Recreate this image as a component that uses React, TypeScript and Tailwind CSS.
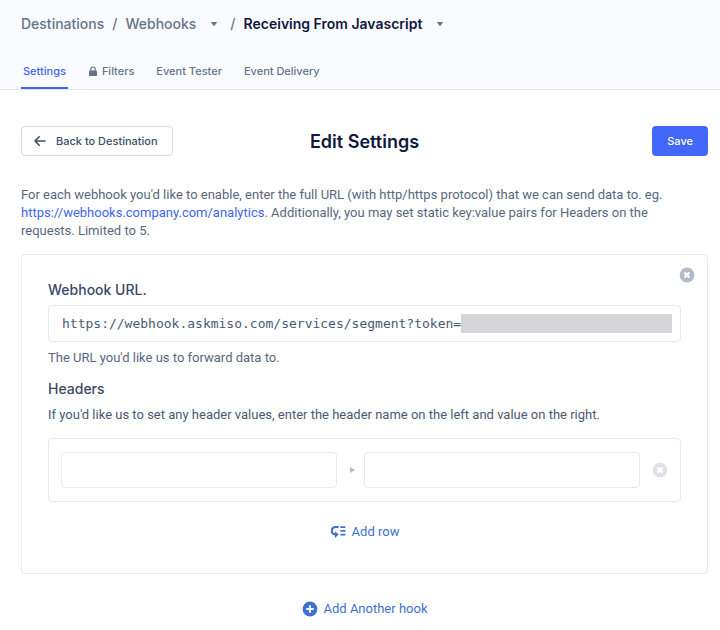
import { useState } from 'react'

const tabs = [
  { id: 'settings', label: 'Settings' },
  { id: 'filters', label: 'Filters', locked: true },
  { id: 'tester', label: 'Event Tester' },
  { id: 'delivery', label: 'Event Delivery' },
]

function Caret() {
  return (
    <svg viewBox="0 0 6 4" className="h-1 w-1.5" fill="currentColor" aria-hidden="true">
      <path d="M.5 0h5a.4.4 0 0 1 .3.7L3.4 3.7a.5.5 0 0 1-.8 0L.2.7A.4.4 0 0 1 .5 0Z" />
    </svg>
  )
}

function LockIcon() {
  return (
    <svg viewBox="0 0 10 11" className="h-[11px] w-2.5" aria-hidden="true">
      <path d="M2.8 5V3.2a2.2 2.2 0 0 1 4.4 0V5" fill="none" stroke="currentColor" strokeWidth="1.2" />
      <rect x="1" y="4.4" width="8" height="5.6" rx=".8" fill="currentColor" />
    </svg>
  )
}

function ArrowLeftIcon() {
  return (
    <svg
      viewBox="0 0 12 12"
      className="size-3"
      fill="none"
      stroke="currentColor"
      strokeWidth="1.6"
      strokeLinecap="round"
      strokeLinejoin="round"
      aria-hidden="true"
    >
      <path d="M11 6H1.2M5.2 1.8 1 6l4.2 4.2" />
    </svg>
  )
}

function CrossCircleIcon() {
  return (
    <svg viewBox="0 0 16 16" className="size-4" aria-hidden="true">
      <circle cx="8" cy="8" r="7.4" fill="currentColor" />
      <path d="m6.1 6.1 3.8 3.8m0-3.8-3.8 3.8" stroke="#fff" strokeWidth="2.2" strokeLinecap="round" />
    </svg>
  )
}

function PlusCircleIcon() {
  return (
    <svg viewBox="0 0 16 16" className="size-4" aria-hidden="true">
      <circle cx="8" cy="8" r="7.4" fill="currentColor" />
      <path d="M8 5v6M5 8h6" stroke="#fff" strokeWidth="1.8" strokeLinecap="round" />
    </svg>
  )
}

function AddRowIcon() {
  return (
    <svg viewBox="0 0 16 14" className="h-3.5 w-4" aria-hidden="true">
      <path d="M8.6 2.1H5A3.8 3.8 0 0 0 5 9.6h.8" fill="none" stroke="currentColor" strokeWidth="2" />
      <path d="M5 6.2 8.6 9.6 5 13Z" fill="currentColor" />
      <path d="M10.4 2.1h5M10.4 5.9h5M10.4 9.6h5" stroke="currentColor" strokeWidth="1.8" />
    </svg>
  )
}

export default function App() {
  const [active, setActive] = useState('settings')

  return (
    <div className="bg-white font-['Inter','Liberation_Sans',sans-serif] text-[#5a6680]">
      <header className="border-b border-[#e4e7ee] bg-[#fafbff] px-[21px]">
        <nav aria-label="Breadcrumb" className="flex h-[47px] items-center text-sm font-medium text-[#66738a]">
          <a href="#destinations">Destinations</a>
          <span className="mx-2">/</span>
          <a href="#webhooks">Webhooks</a>
          <button type="button" aria-label="Switch destination" className="ml-3.5 p-px">
            <Caret />
          </button>
          <span className="mr-2 ml-3">/</span>
          <a href="#javascript" aria-current="page" className="font-semibold text-[#101840]">
            Receiving From Javascript
          </a>
          <button type="button" aria-label="Switch source" className="ml-3.5 p-px">
            <Caret />
          </button>
        </nav>

        <div role="tablist" className="mt-1 flex gap-[18px] text-[11px] font-medium">
          {tabs.map((tab) => (
            <button
              key={tab.id}
              type="button"
              role="tab"
              aria-selected={active === tab.id}
              onClick={() => setActive(tab.id)}
              className={
                active === tab.id
                  ? 'flex h-[38px] items-center gap-1 border-b-2 border-[#4164f5] px-0.5 pt-1 text-[#4164f5]'
                  : 'flex h-[38px] items-center gap-1 border-b-2 border-transparent px-0.5 pt-1 text-[#66738a]'
              }
            >
              {tab.locked && <LockIcon />}
              {tab.label}
            </button>
          ))}
        </div>
      </header>

      <main className="pt-9 pr-3 pl-[21px] font-['Roboto','Liberation_Sans',sans-serif] text-[13px]">
        <div className="grid grid-cols-[1fr_auto_1fr] items-center font-['Inter','Liberation_Sans',sans-serif]">
          <button
            type="button"
            className="flex h-[30px] items-center gap-2.5 justify-self-start rounded border border-[#d8dae5] pr-3.5 pl-3 text-[11px] font-medium text-[#434c6b]"
          >
            <ArrowLeftIcon />
            Back to Destination
          </button>
          <h1 className="pt-0.5 text-lg font-semibold text-[#101840]">Edit Settings</h1>
          <button
            type="button"
            className="h-[30px] justify-self-end rounded bg-[#4367f8] px-[15px] text-[11px] font-medium text-white"
          >
            Save
          </button>
        </div>

        <p className="mt-[30px] pr-6 leading-[18px]">
          For each webhook you'd like to enable, enter the full URL (with http/https protocol) that we can send data
          to. eg.{' '}
          <a href="#analytics" className="text-[#4164f5]">
            https://webhooks.company.com/analytics
          </a>
          . Additionally, you may set static key:value pairs for Headers on the requests. Limited to 5.
        </p>

        <section className="relative mt-3.5 rounded border border-[#e6e9ef] px-[26px] pt-[25px] pb-[31px]">
          <button type="button" aria-label="Remove hook" className="absolute top-3 right-3 text-[#b4bac8]">
            <CrossCircleIcon />
          </button>

          <label
            htmlFor="webhook-url"
            className="block font-['Inter','Liberation_Sans',sans-serif] text-sm leading-5 font-medium text-[#3d4868]"
          >
            Webhook URL.
          </label>
          <div className="mt-[5px] flex h-[37px] items-center rounded border border-[#e6e9ef] pr-2 pl-[13px]">
            <input
              id="webhook-url"
              type="text"
              defaultValue="https://webhook.askmiso.com/services/segment?token="
              className="w-[399px] font-['DejaVu_Sans_Mono','Liberation_Mono',monospace] text-[13px] text-[#4c5873] outline-none"
            />
            <span className="h-[19px] flex-1 bg-[#d4d5d7]" />
          </div>
          <p className="mt-[7px] leading-[18px]">The URL you'd like us to forward data to.</p>

          <h2 className="mt-3 font-['Inter','Liberation_Sans',sans-serif] text-sm leading-5 font-medium text-[#3d4868]">
            Headers
          </h2>
          <p className="mt-[7px] leading-[18px] text-[#4c5873]">
            If you'd like us to set any header values, enter the header name on the left and value on the right.
          </p>

          <div className="mt-3.5 flex items-center rounded border border-[#e6e9ef] px-3 py-[13px]">
            <input
              type="text"
              aria-label="Header name"
              className="h-9 min-w-0 flex-1 rounded border border-[#e6e9ef] px-3"
            />
            <svg viewBox="0 0 5 6" className="mr-[9px] ml-[13px] h-1.5 w-[5px] text-[#b4bac8]" aria-hidden="true">
              <path d="M0 0v6l5-3Z" fill="currentColor" />
            </svg>
            <input
              type="text"
              aria-label="Header value"
              className="h-9 min-w-0 flex-1 rounded border border-[#e6e9ef] px-3"
            />
            <button type="button" aria-label="Remove row" className="ml-3 text-[#dfe1e8]">
              <CrossCircleIcon />
            </button>
          </div>

          <button type="button" className="mx-auto mt-5 flex h-5 items-center gap-1.5 text-[#3f70ce]">
            <AddRowIcon />
            Add row
          </button>
        </section>

        <button type="button" className="mx-auto mt-[25px] flex h-5 items-center gap-1.5 text-[#3f70ce]">
          <PlusCircleIcon />
          Add Another hook
        </button>
      </main>
    </div>
  )
}
